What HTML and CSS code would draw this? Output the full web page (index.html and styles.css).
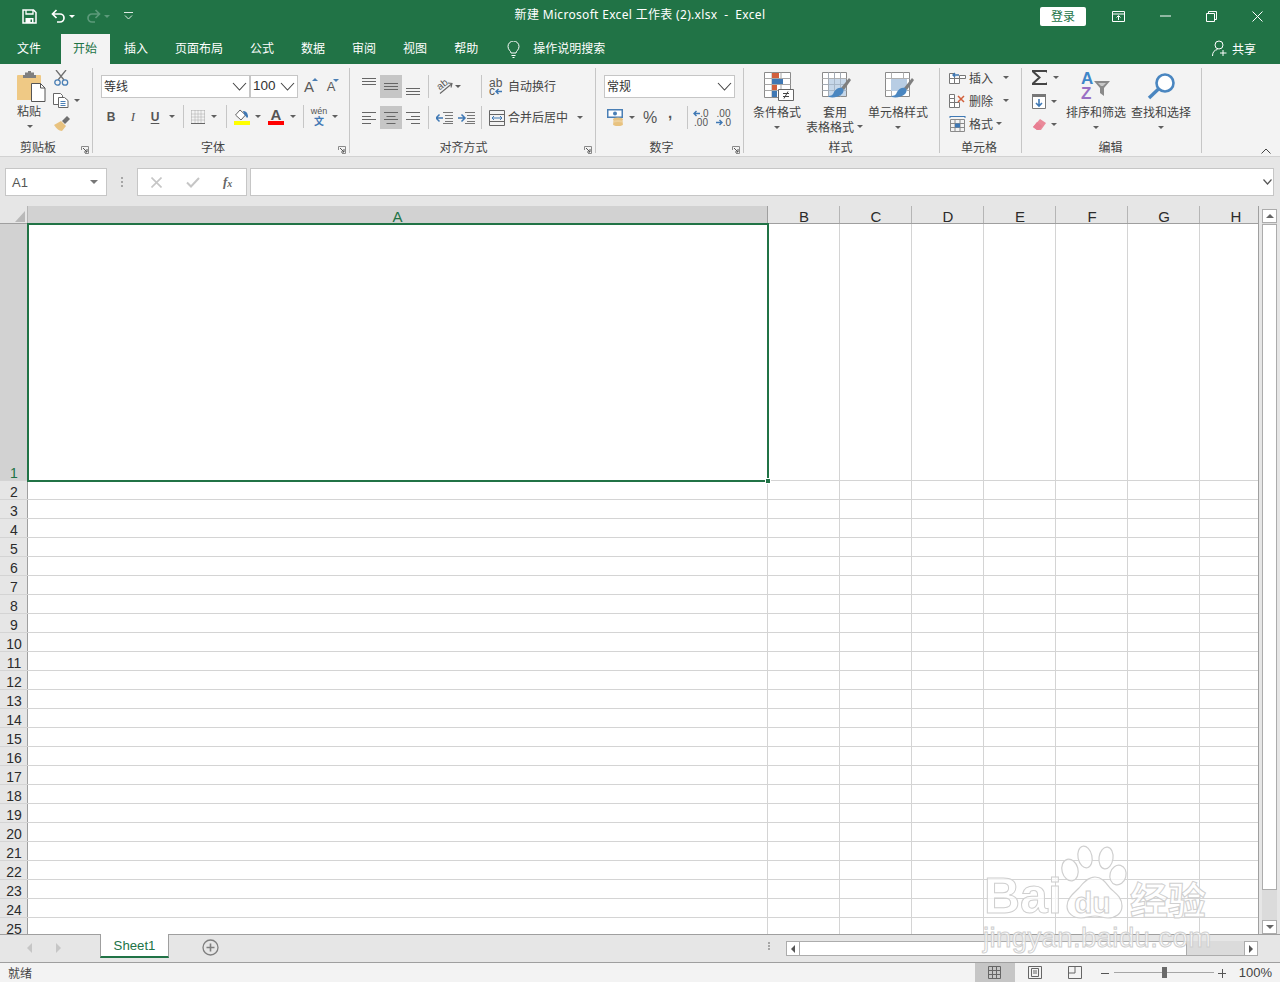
FILE: index.html
```html
<!DOCTYPE html>
<html lang="zh-CN">
<head>
<meta charset="utf-8">
<title>新建 Microsoft Excel 工作表 (2).xlsx - Excel</title>
<link rel="stylesheet" href="styles.css">
</head>
<body>
<svg class="sprite" aria-hidden="true">
  <symbol id="chev" viewBox="0 0 15 9"><path d="M1 1l6.500 7L14 1" fill="none" stroke="#444" stroke-width="1.100"/></symbol>
  <symbol id="launch" viewBox="0 0 8 8"><path d="M.5 4V.5h7v7H4" fill="none" stroke="#8a8a8a"/><path d="M2 2l4 4M6 3v3H3" fill="none" stroke="#555"/></symbol>
  <symbol id="a-top" viewBox="0 0 14 20"><path d="M0 1.500h14M0 4.500h14M0 7.500h14" stroke="#666"/></symbol>
  <symbol id="a-mid" viewBox="0 0 14 20"><path d="M0 6.500h14M0 9.500h14M0 12.500h14" stroke="#666"/></symbol>
  <symbol id="a-bot" viewBox="0 0 14 20"><path d="M0 11.500h14M0 14.500h14M0 17.500h14" stroke="#666"/></symbol>
  <symbol id="a-l" viewBox="0 0 14 14"><path d="M0 1.500h14M0 5.500h9M0 8.500h14M0 12.500h9" stroke="#666"/></symbol>
  <symbol id="a-c" viewBox="0 0 14 14"><path d="M0 1.500h14M2.500 5.500h9M0 8.500h14M2.500 12.500h9" stroke="#666"/></symbol>
  <symbol id="a-r" viewBox="0 0 14 14"><path d="M0 1.500h14M5 5.500h9M0 8.500h14M5 12.500h9" stroke="#666"/></symbol>
  <symbol id="brush" viewBox="0 0 30 29"><path d="M19 16l8-10 2 2-7 10z" fill="#7f7f7f"/><path d="M12 20c2-4 6-5 8-4s2 4 0 6c-3 3-9 4-13 3l-1-1c3 0 5-1 6-4z" fill="#4a86c0"/></symbol>
  <symbol id="arl" viewBox="0 0 7 7"><path d="M7 3.500H1M3.500 1L1 3.500 3.500 6" fill="none" stroke="#3f78b4" stroke-width="1.400"/></symbol>
  <symbol id="arr" viewBox="0 0 7 7"><path d="M0 3.500h6M3.500 1L6 3.500 3.500 6" fill="none" stroke="#3f78b4" stroke-width="1.400"/></symbol>
</svg>

<header class="titlebar">
  <div class="qat">
    <svg class="i-save" width="15" height="15" viewBox="0 0 15 15"><path d="M1 1h10.500L14 3.500V14H1z" fill="none" stroke="#fff" stroke-width="1.500"/><path d="M4 1v4h7V1" fill="none" stroke="#fff" stroke-width="1.300"/><path d="M3.500 9h8v5h-8z" fill="#fff"/><path d="M8.500 10.500H10V13H8.500z" fill="#217346"/></svg>
    <svg class="i-undo" width="15" height="14" viewBox="0 0 15 14"><path d="M5.500 1l-4 4 4 4M1.500 5H9a4 4 0 0 1 0 8H6" fill="none" stroke="#fff" stroke-width="1.700"/></svg>
    <span class="caret light w12"></span>
    <svg class="i-redo" width="15" height="14" viewBox="0 0 15 14"><path d="M9.500 1l4 4-4 4M13.500 5H6a4 4 0 0 0 0 8h3" fill="none" stroke="#5c9a7a" stroke-width="1.700"/></svg>
    <span class="caret dim w12"></span>
    <svg class="i-custom" width="9" height="8" viewBox="0 0 9 8"><path d="M0 .5h9M1 3.500l3.500 3.500L8 3.500" fill="none" stroke="#dfeae4"/></svg>
  </div>
  <div class="doc-title">新建 Microsoft Excel 工作表 (2).xlsx&nbsp; -&nbsp; Excel</div>
  <div class="winctl">
    <button class="login">登录</button>
    <span class="wbtn"><svg width="14" height="11" viewBox="0 0 14 11"><path d="M.5.500h12v10H.500zM.5 3h12" fill="none" stroke="#fff"/><path d="M6.500 9V5M4.500 6.500l2-2 2 2" fill="none" stroke="#fff"/></svg></span>
    <span class="wbtn"><svg width="11" height="2" viewBox="0 0 11 2"><path d="M0 1h11" stroke="#fff"/></svg></span>
    <span class="wbtn"><svg width="11" height="11" viewBox="0 0 11 11"><path d="M.5 2.500h8v8h-8zM2.500 2.500v-2h8v8h-2" fill="none" stroke="#fff"/></svg></span>
    <span class="wbtn"><svg width="11" height="11" viewBox="0 0 11 11"><path d="M.5.500l10 10M10.500.500l-10 10" stroke="#fff"/></svg></span>
  </div>
</header>

<nav class="tabs">
  <span class="tab first">文件</span>
  <span class="tab active">开始</span>
  <span class="tab">插入</span>
  <span class="tab">页面布局</span>
  <span class="tab">公式</span>
  <span class="tab">数据</span>
  <span class="tab">审阅</span>
  <span class="tab">视图</span>
  <span class="tab">帮助</span>
  <svg class="bulb" width="13" height="17" viewBox="0 0 13 17"><path d="M4 12c0-2-3-3-3-6.500a5.500 5.500 0 0 1 11 0C12 9 9 10 9 12zM4.500 14.500h4M5.500 16.500h2" fill="none" stroke="#fff"/></svg>
  <span class="tell">操作说明搜索</span>
  <span class="share">
    <svg width="15" height="17" viewBox="0 0 15 17"><circle cx="7" cy="5" r="4" fill="none" stroke="#fff"/><path d="M.5 16c0-4 2-6 5-6.500M11 10v6M8 13h6.500" fill="none" stroke="#fff"/></svg>
    共享
  </span>
</nav>

<section class="ribbon">
  <div class="group g-clip">
    <div class="body clip">
      <div class="paste">
        <svg width="29" height="31" viewBox="0 0 29 31"><path d="M0 5a1 1 0 0 1 1-1h22a1 1 0 0 1 1 1v24H0z" fill="#efc985"/><path d="M8 4V1.500h3V0h3v1.500h3V4h2v3H6V4z" fill="#7f7f7f"/><path d="M14.500 12.500h9l4.500 4.500v13.500H14.500z" fill="#fff" stroke="#555"/><path d="M23.500 12.500V17H28" fill="none" stroke="#555"/></svg>
        <span class="lbl">粘贴</span>
        <span class="caret"></span>
      </div>
      <div class="clip-tools">
        <svg width="15" height="16" viewBox="0 0 15 16"><path d="M2 0l8 10M12 0L4 10" stroke="#6f6f6f" stroke-width="1.300"/><circle cx="3.500" cy="12.500" r="2.700" fill="none" stroke="#4a7fb5" stroke-width="1.300"/><circle cx="11" cy="12.500" r="2.700" fill="none" stroke="#4a7fb5" stroke-width="1.300"/></svg>
        <span class="row-mini">
          <svg width="16" height="15" viewBox="0 0 16 15"><path d="M.5.500h7l2 2v9H.500z" fill="#fff" stroke="#666"/><path d="M5.500 4.500h6l3.500 3v7H5.500z" fill="#fff" stroke="#666"/><path d="M7.500 8.500h5M7.500 10.500h5M7.500 12.500h5" stroke="#4a7fb5"/></svg>
          <span class="caret w12"></span>
        </span>
        <svg class="painter" width="17" height="15" viewBox="0 0 17 15"><path d="M9 5l5-5 3 3-5 5z" fill="#6f6f6f"/><path d="M1 9l7-4 5 5-4 5c-3 0-6-3-8-6z" fill="#e8c27f"/></svg>
      </div>
    </div>
    <div class="glabel"><span>剪贴板</span><svg class="launch"><use href="#launch"/></svg></div>
  </div>

  <div class="group g-font">
    <div class="body rows">
      <div class="row">
        <div class="combo c-font"><span>等线</span><svg width="15" height="9"><use href="#chev"/></svg></div>
        <div class="combo c-size"><span class="num">100</span><svg width="15" height="9"><use href="#chev"/></svg></div>
        <span class="fs up">A<i></i></span>
        <span class="fs down">A<i></i></span>
      </div>
      <div class="row">
        <span class="w22 fmt b">B</span><span class="w22 fmt it">I</span><span class="w22 fmt u">U</span><span class="caret w12"></span>
        <span class="sep s5"></span>
        <span class="w18"><svg width="14" height="14" viewBox="0 0 14 14"><path d="M.5.500h13M.5 4h13M.5 7h13M.5 10h13M.5.500v13M4 .5v13M7 .5v13M10 .5v13M13.500.500v13" stroke="#a8a8a8" stroke-dasharray="1 1" fill="none"/><path d="M0 13.500h14" stroke="#666"/></svg></span><span class="caret w14"></span>
        <span class="sep s5"></span>
        <span class="w20 col"><svg width="16" height="12" viewBox="0 0 16 12"><path d="M6 1l5.500 5L7 11 1.500 6z" fill="#fff" stroke="#666"/><path d="M9 2c3 0 5 2 5 6l-1 1-3-4z" fill="#3f78b4"/></svg><i class="bar yellow"></i></span><span class="caret w12"></span>
        <span class="w24 col"><span class="fc">A</span><i class="bar red"></i></span><span class="caret w10"></span>
        <span class="sep s5"></span>
        <span class="w20 wen"><span>wén</span><b>文</b></span><span class="caret w12"></span>
      </div>
    </div>
    <div class="glabel"><span>字体</span><svg class="launch"><use href="#launch"/></svg></div>
  </div>

  <div class="group g-align">
    <div class="body rows">
      <div class="row">
        <span class="w22"><svg width="14" height="20"><use href="#a-top"/></svg></span><span class="w22 on"><svg width="14" height="20"><use href="#a-mid"/></svg></span><span class="w22"><svg width="14" height="20"><use href="#a-bot"/></svg></span>
        <span class="sep s4"></span>
        <span class="w18 ml6"><svg width="17" height="17" viewBox="0 0 17 17"><path d="M4 15.500L15.500 6M12 5l4 .5-1 4" fill="none" stroke="#666" stroke-width="1.100"/><text x="2" y="11" class="orient" transform="rotate(-38 5 9)">ab</text></svg></span><span class="caret w10"></span>
        <span class="sep ml18"></span>
        <span class="wrapic"><span class="abc">ab<br>c<svg width="7" height="7"><use href="#arl"/></svg></span></span>
        <span class="lbl ml3">自动换行</span>
      </div>
      <div class="row">
        <span class="w22"><svg width="14" height="14"><use href="#a-l"/></svg></span><span class="w22 on"><svg width="14" height="14"><use href="#a-c"/></svg></span><span class="w22"><svg width="14" height="14"><use href="#a-r"/></svg></span>
        <span class="sep s4"></span>
        <span class="w18 ml6"><svg width="17" height="12" viewBox="0 0 17 12"><path d="M7 .5h10M9 3.500h8M9 6.500h8M9 9.500h8M7 11.500h10" stroke="#777"/><path d="M0 6h7M3.500 2.500L0 6l3.500 3.500" fill="none" stroke="#3f78b4" stroke-width="1.500"/></svg></span>
        <span class="w18 ml4"><svg width="17" height="12" viewBox="0 0 17 12"><path d="M7 .5h10M9 3.500h8M9 6.500h8M9 9.500h8M7 11.500h10" stroke="#777"/><path d="M0 6h7M3.500 2.500L7 6 3.500 9.500" fill="none" stroke="#3f78b4" stroke-width="1.500"/></svg></span>
        <span class="sep ml6r"></span>
        <span class="wrapic"><svg width="16" height="16" viewBox="0 0 16 16"><path d="M.5.500h15v15H.500zM.5 4.500h15M.5 11.500h15" fill="none" stroke="#666"/><path d="M3 8h10M5 6L3 8l2 2M11 6l2 2-2 2" fill="none" stroke="#3f78b4"/></svg></span>
        <span class="lbl ml3">合并后居中</span><span class="caret w12 ml6"></span>
      </div>
    </div>
    <div class="glabel"><span>对齐方式</span><svg class="launch"><use href="#launch"/></svg></div>
  </div>

  <div class="group g-num">
    <div class="body rows">
      <div class="row">
        <div class="combo c-fmt"><span>常规</span><svg width="15" height="9"><use href="#chev"/></svg></div>
      </div>
      <div class="row">
        <span class="w22"><svg width="17" height="17" viewBox="0 0 17 17"><path d="M0 0h16v9H0z" fill="#4a7fb5"/><path d="M1.500 1.500h13v6h-13z" fill="#fff"/><circle cx="8" cy="4.500" r="2" fill="#4a7fb5"/><ellipse cx="11" cy="10.500" rx="5" ry="2" fill="#e8c27f"/><ellipse cx="11" cy="13" rx="5" ry="2" fill="#edd09c"/><ellipse cx="11" cy="15" rx="5" ry="2" fill="#e8c27f"/></svg></span><span class="caret w12"></span>
        <span class="w24 pct">%</span><span class="w16 comma">,</span>
        <span class="sep ml9"></span>
        <span class="w18 ml4 dec"><span><svg width="7" height="7"><use href="#arl"/></svg>.0</span><span>.00</span></span>
        <span class="w17 ml5 dec"><span>.00</span><span><svg width="7" height="7"><use href="#arr"/></svg>.0</span></span>
      </div>
    </div>
    <div class="glabel"><span>数字</span><svg class="launch"><use href="#launch"/></svg></div>
  </div>

  <div class="group g-style">
    <div class="body bigs">
      <div class="big b48">
        <svg class="st" width="30" height="29" viewBox="0 0 30 29"><path d="M.5.500h26v25H.500z" fill="#fff" stroke="#8a8a8a"/><path d="M8 .5v25M17 .5v25M.5 6.500h26M.5 12.500h26M.5 18.500h26" stroke="#a6a6a6"/><path d="M8 1h7v5H8zM8 13h5v5H8z" fill="#d2603c"/><path d="M8 7h11v5H8zM8 19h5v6H8z" fill="#3f78b4"/><path d="M14.500 17.500h15v11h-15z" fill="#fff" stroke="#666"/><path d="M19 21.500h6M19 24.500h6M24 19.500l-4 7" stroke="#444"/></svg>
        <span class="lbl">条件格式</span><span class="caret"></span>
      </div>
      <div class="big b58">
        <svg class="st" width="30" height="29" viewBox="0 0 30 29"><path d="M.5.500h24v24H.500z" fill="#fff" stroke="#8a8a8a"/><path d="M6.500.5v24M12.500.5v24M18.500.5v24M.5 6.500h24M.5 12.500h24M.5 18.500h24" stroke="#b0b0b0"/><path d="M7 7h17v17H7z" fill="#b8cde4" opacity=".8"/><path d="M6.500.5v24M12.500.5v24M18.500.5v24M.5 12.500h24M.5 18.500h24" stroke="#9aa8b8" opacity=".5"/><use href="#brush"/></svg>
        <span class="lbl">套用</span><span class="lbl2">表格格式<span class="caret w10"></span></span>
      </div>
      <div class="big b60">
        <svg class="st" width="30" height="29" viewBox="0 0 30 29"><path d="M.5.500h24v24H.500z" fill="#fff" stroke="#8a8a8a"/><path d="M6.500.5v6M18.500.5v6M.5 6.500h24M.5 18.500h24M6.500 18.500v6" stroke="#b0b0b0"/><path d="M6 7h16v12H6z" fill="#b8cde4"/><use href="#brush"/></svg>
        <span class="lbl">单元格样式</span><span class="caret"></span>
      </div>
    </div>
    <div class="glabel"><span>样式</span></div>
  </div>

  <div class="group g-cells">
    <div class="body cellcol">
      <div class="crow">
        <svg width="17" height="16" viewBox="0 0 17 16"><path d="M.5 3.500h5v5h-5zM.5 8.500h5v5h-5zM5.500 8.500h5v5h-5zM10.500 5.500h6v3h-6z" fill="#fff" stroke="#777"/><path d="M10 5H4M6 3L4 5l2 2" fill="none" stroke="#3f78b4" stroke-width="1.400"/></svg>
        <span class="lbl ml3">插入</span><span class="caret w12 ml7"></span>
      </div>
      <div class="crow">
        <svg width="17" height="16" viewBox="0 0 17 16"><path d="M.5 1.500h5v4h-5zM.5 5.500h5v4h-5zM.5 9.500h5v5h-5zM5.500 9.500h5v5h-5z" fill="#fff" stroke="#777"/><path d="M9 3l6 6M15 3l-6 6" stroke="#d2603c" stroke-width="1.500"/></svg>
        <span class="lbl ml3">删除</span><span class="caret w12 ml7"></span>
      </div>
      <div class="crow">
        <svg width="17" height="16" viewBox="0 0 17 16"><path d="M1.500 3.500h14v12h-14zM1.500 7.500h14M1.500 11.500h14M6 3.500v12M11 3.500v12" fill="none" stroke="#8a8a8a"/><path d="M6 7.500h5v4H6z" fill="#3f78b4"/><path d="M1 .5h15M1 0v2M16 0v2" stroke="#3f78b4"/></svg>
        <span class="lbl ml3">格式</span><span class="caret w12"></span>
      </div>
    </div>
    <div class="glabel"><span>单元格</span></div>
  </div>

  <div class="group g-edit">
    <div class="body edit">
      <div class="ecol">
        <div class="erow e1"><svg width="15" height="15" viewBox="0 0 15 15"><path d="M15 2.500V1H1v.5L7.500 7.500 1 13.500v.5h14v-1.500" fill="none" stroke="#444" stroke-width="2"/></svg><span class="caret w12 ml3"></span></div>
        <div class="erow"><svg width="15" height="15" viewBox="0 0 15 15"><path d="M.5.500h13v14H.500z" fill="#fff" stroke="#777"/><path d="M0 0h14v3H0z" fill="#777"/><path d="M7 5v7M4 9l3 3 3-3" fill="none" stroke="#3f78b4" stroke-width="1.600"/></svg><span class="caret w12 ml1"></span></div>
        <div class="erow"><svg width="15" height="14" viewBox="0 0 15 14"><path d="M8 1l6 4-5 7H5L1 9z" fill="#ea8a9a"/><path d="M1 9l4-5 5 4-3 4H5z" fill="#e87e92"/></svg><span class="caret w12 ml1"></span></div>
      </div>
      <div class="big b60 sortbtn">
        <div class="sorti"><span class="sa">A</span><span class="sz">Z</span><svg width="16" height="15" viewBox="0 0 16 15"><path d="M0 0h16L10 7v8L6 12V7z" fill="#8a8a8a"/><path d="M4 2h8L9 5H7z" fill="#c8c8c8"/></svg></div>
        <span class="lbl">排序和筛选</span><span class="caret"></span>
      </div>
      <div class="big b60 ml5">
        <svg width="29" height="29" viewBox="0 0 29 29"><circle cx="18" cy="11" r="8.500" fill="#fff" stroke="#4a86c0" stroke-width="2.600"/><path d="M11.500 17L2 26" stroke="#4a86c0" stroke-width="3.400"/></svg>
        <span class="lbl">查找和选择</span><span class="caret"></span>
      </div>
    </div>
    <div class="glabel"><span>编辑</span></div>
  </div>

  <div class="collapse"><svg width="10" height="6" viewBox="0 0 10 6"><path d="M.5 5.500L5 1l4.500 4.500" fill="none" stroke="#444"/></svg></div>
</section>

<section class="fbar">
  <div class="namebox"><span>A1</span><i class="tri"></i></div>
  <div class="vdots"><i></i><i></i><i></i></div>
  <div class="fbtns">
    <svg width="11" height="11" viewBox="0 0 11 11"><path d="M.5.500l10 10M10.500.500l-10 10" stroke="#c6c6c6" stroke-width="1.600"/></svg>
    <svg width="14" height="11" viewBox="0 0 14 11"><path d="M1 5.500l4 4L13 1" fill="none" stroke="#c6c6c6" stroke-width="2"/></svg>
    <span class="fx">f<sub>x</sub></span>
  </div>
  <div class="finput"><svg width="9" height="6" viewBox="0 0 9 6"><path d="M.5.500L4.500 5l4-4.500" fill="none" stroke="#555" stroke-width="1.200"/></svg></div>
</section>

<main class="main">
  <div class="sheet">
    <div class="colhead">
      <div class="corner"><i></i></div>
      <div class="ch a active">A</div><div class="ch">B</div><div class="ch">C</div><div class="ch">D</div><div class="ch">E</div><div class="ch">F</div><div class="ch">G</div><div class="ch">H</div>
    </div>
    <div class="r first"><div class="rh active">1</div><div class="cells"></div></div>
    <div class="r"><div class="rh">2</div><div class="cells"></div></div>
    <div class="r"><div class="rh">3</div><div class="cells"></div></div>
    <div class="r"><div class="rh">4</div><div class="cells"></div></div>
    <div class="r"><div class="rh">5</div><div class="cells"></div></div>
    <div class="r"><div class="rh">6</div><div class="cells"></div></div>
    <div class="r"><div class="rh">7</div><div class="cells"></div></div>
    <div class="r"><div class="rh">8</div><div class="cells"></div></div>
    <div class="r"><div class="rh">9</div><div class="cells"></div></div>
    <div class="r"><div class="rh">10</div><div class="cells"></div></div>
    <div class="r"><div class="rh">11</div><div class="cells"></div></div>
    <div class="r"><div class="rh">12</div><div class="cells"></div></div>
    <div class="r"><div class="rh">13</div><div class="cells"></div></div>
    <div class="r"><div class="rh">14</div><div class="cells"></div></div>
    <div class="r"><div class="rh">15</div><div class="cells"></div></div>
    <div class="r"><div class="rh">16</div><div class="cells"></div></div>
    <div class="r"><div class="rh">17</div><div class="cells"></div></div>
    <div class="r"><div class="rh">18</div><div class="cells"></div></div>
    <div class="r"><div class="rh">19</div><div class="cells"></div></div>
    <div class="r"><div class="rh">20</div><div class="cells"></div></div>
    <div class="r"><div class="rh">21</div><div class="cells"></div></div>
    <div class="r"><div class="rh">22</div><div class="cells"></div></div>
    <div class="r"><div class="rh">23</div><div class="cells"></div></div>
    <div class="r"><div class="rh">24</div><div class="cells"></div></div>
    <div class="r"><div class="rh">25</div><div class="cells"></div></div>
    <div class="selection"><i></i></div>
  </div>
  <div class="vscroll">
    <span class="sbtn"><i class="t-up"></i></span>
    <div class="vtrack"><div class="vthumb"></div></div>
    <span class="sbtn"><i class="t-down"></i></span>
  </div>
</main>

<section class="sheetbar">
  <i class="t-left nav1"></i>
  <i class="t-right nav2"></i>
  <div class="stab">Sheet1</div>
  <svg class="addsheet" width="17" height="17" viewBox="0 0 17 17"><circle cx="8.500" cy="8.500" r="7.500" fill="none" stroke="#7f7f7f" stroke-width="1.300"/><path d="M8.500 4.500v8M4.500 8.500h8" stroke="#7f7f7f" stroke-width="1.600"/></svg>
  <div class="vdots small"><i></i><i></i><i></i></div>
  <div class="hscroll">
    <span class="sbtn"><i class="t-leftd"></i></span>
    <div class="hthumb"></div>
    <span class="sbtn end"><i class="t-rightd"></i></span>
  </div>
</section>

<footer class="status">
  <span class="ready">就绪</span>
  <div class="views">
    <span class="vb on"><svg width="13" height="13" viewBox="0 0 13 13"><path d="M.5.500h12v12H.500zM4.500.5v12M8.500.5v12M.5 4.500h12M.5 8.500h12" fill="none" stroke="#666"/></svg></span>
    <span class="vb"><svg width="14" height="13" viewBox="0 0 14 13"><path d="M.5.500h13v12H.500z" fill="none" stroke="#666"/><path d="M3.500 2.500h7v8h-7zM5 5h4M5 7h4" fill="none" stroke="#666"/></svg></span>
    <span class="vb"><svg width="14" height="13" viewBox="0 0 14 13"><path d="M.5 12.500V.5h13v12zM7 .5V7H.500" fill="none" stroke="#666"/></svg></span>
  </div>
  <span class="zm minus"></span>
  <div class="slider"><i></i></div>
  <span class="zm plus"></span>
  <span class="pctz">100%</span>
</footer>

<div class="wm" aria-label="Baidu经验">
  <svg class="wm-paw" width="72" height="76" viewBox="0 0 72 76"><g fill="rgba(255,255,255,.72)" stroke="#cfcfcf" stroke-width="1.200"><ellipse cx="12" cy="26" rx="8" ry="11" transform="rotate(-15 12 26)"/><ellipse cx="27" cy="13" rx="7" ry="11" transform="rotate(-12 27 13)"/><ellipse cx="48" cy="14" rx="7" ry="11" transform="rotate(8 48 14)"/><ellipse cx="60" cy="31" rx="8" ry="10" transform="rotate(15 60 31)"/><path d="M37 33c7 0 11 6 15 11 5 5 12 9 12 18 0 8-7 12-14 12-5 0-8-2-13-2s-8 2-14 2c-8 0-14-5-14-12 0-8 7-13 12-18 4-5 9-11 16-11z"/></g></svg>
  <span class="wm-bai">Bai</span>
  <span class="wm-du">du</span>
  <span class="wm-jy">经验</span>
  <span class="wm-url">jingyan.baidu.com</span>
</div>
</body>
</html>
```
FILE: styles.css
```css
* { box-sizing: border-box; }
html, body { margin: 0; padding: 0; }
body {
  width: 1280px; height: 982px; overflow: hidden; position: relative;
  font: 12px/15px "Noto Sans CJK SC", "Noto Sans", sans-serif;
  color: #444; background: #e6e6e6;
}
i, b { font-style: normal; }
svg { display: block; flex: none; }
.sprite { position: absolute; width: 0; height: 0; }

.titlebar { height: 32px; background: #217346; color: #fff; display: grid; grid-template-columns: 1fr auto 1fr; align-items: center; }
.qat { display: flex; align-items: center; padding-left: 22px; }
.i-undo { margin-left: 14px; }
.i-redo { margin-left: 8px; }
.i-custom { margin-left: 11px; }
.doc-title { font-family: "Noto Sans", "Noto Sans CJK SC", sans-serif; font-size: 12px; letter-spacing: .32px; line-height: 29px; height: 32px; white-space: nowrap; }
.winctl { display: flex; align-items: center; justify-content: flex-end; }
.login { width: 46px; height: 19px; margin: 0 10px 0 0; padding: 0 0 2px; border: 0; border-radius: 2px; background: #fff; color: #217346; font: 12px/17px "Noto Sans CJK SC", sans-serif; }
.wbtn { width: 46px; height: 32px; display: flex; align-items: center; justify-content: center; }

.tabs { height: 32px; background: #217346; color: #fff; display: flex; align-items: flex-end; }
.tab { height: 30px; line-height: 28px; padding: 0 13px; margin-right: 1px; }
.tab.first { padding: 0 19px 0 17px; }
.tab.active { background: #f3f3f3; color: #217346; padding: 0 13px 0 12px; }
.bulb { margin: 0 0 6px 15px; }
.tell { margin-left: 13px; line-height: 28px; height: 30px; }
.share { margin-left: auto; padding: 0 24px 2px 0; display: flex; align-items: center; gap: 5px; height: 30px; }

.ribbon { height: 93px; background: #f3f3f3; border-bottom: 1px solid #d2d2d2; display: flex; align-items: flex-start; padding-top: 4px; }
.group { height: 85px; border-right: 1px solid #c6c6c6; display: flex; flex-direction: column; }
.g-clip { width: 93px; }
.g-font { width: 257px; }
.g-align { width: 246px; }
.g-num { width: 148px; }
.g-style { width: 196px; }
.g-cells { width: 82px; }
.g-edit { width: 180px; }
.body { height: 71px; }
.glabel { height: 14px; line-height: 16px; display: flex; }
.glabel span { flex: 1; text-align: center; }
.g-style .glabel span, .g-edit .glabel span, .g-align .glabel span { margin-right: 2px; }
.g-cells .glabel span { margin-right: 3px; }
.launch { width: 8px; height: 8px; margin: 7px 3px 0 5px; }

.caret { display: inline-flex; align-items: center; justify-content: center; height: 8px; }
.caret::after { content: ""; border: 3px solid transparent; border-top: 3px solid #5f5f5f; border-bottom: 0; display: block; }
.caret.light::after { border-top-color: #fff; }
.caret.dim::after { border-top-color: #5c9a7a; }
.w10 { width: 10px; } .w12 { width: 12px; } .w14 { width: 14px; } .w16 { width: 16px; } .w17 { width: 17px; } .w18 { width: 18px; } .w20 { width: 20px; } .w22 { width: 22px; } .w24 { width: 24px; }
.ml1 { margin-left: 1px; } .ml3 { margin-left: 3px; } .ml4 { margin-left: 4px; } .ml5 { margin-left: 5px; } .ml6 { margin-left: 6px; } .ml7 { margin-left: 7px; }

.clip { display: flex; padding: 3px 0 0 17px; }
.paste { width: 29px; display: flex; flex-direction: column; align-items: flex-start; }
.paste .lbl { margin-top: 1px; }
.paste .caret { width: 26px; margin-top: 4px; }
.clip-tools { margin-left: 7px; display: flex; flex-direction: column; gap: 7px; }
.clip-tools > svg:first-child { margin-left: 1px; margin-top: -1px; }
.painter { margin-top: 1px; }
.row-mini { display: flex; align-items: center; }
.row-mini .caret { margin-left: 2px; }

.rows { padding-top: 7px; display: flex; flex-direction: column; gap: 7px; }
.row { height: 23px; display: flex; align-items: center; }
.g-font .rows { padding-left: 8px; }
.g-font .row:last-child { margin-left: -1px; }
.g-align .rows { padding-left: 8px; gap: 8px; }
.g-num .rows { padding-left: 8px; gap: 8px; }
.row > span { display: flex; align-items: center; justify-content: center; height: 23px; }
.row > span.caret { height: 23px; }
.row > span.lbl { display: block; line-height: 21px; height: 23px; white-space: nowrap; }
.on { background: #c6c6c6; }

.combo { height: 23px; background: #fff; border: 1px solid #c6c6c6; display: flex; align-items: center; justify-content: space-between; padding: 0 2px; color: #333; }
.combo span { margin-top: -2px; }
.c-font { width: 149px; }
.c-size { width: 48px; }
.c-fmt { width: 131px; }
.num { font: 13.500px/20px "Liberation Sans", sans-serif; }
.row > .fs { position: relative; width: 22px; font: 15px/20px "Liberation Sans", sans-serif; color: #595959; }
.row > .fs.down { font-size: 13px; }
.fs i { position: absolute; right: 2px; top: 3px; border: 3px solid transparent; border-top: 0; border-bottom: 3px solid #4a7fb5; }
.fs.down i { border-bottom: 0; border-top: 3px solid #4a7fb5; top: 4px; right: 3px; }
.row > .fmt { font: bold 12px/20px "Liberation Sans", sans-serif; color: #555; }
.row > .fmt.it { font: italic 13px/20px "Liberation Serif", serif; }
.fmt.u { text-decoration: underline; text-underline-offset: 2px; }
.sep { width: 1px; background: #c6c6c6; flex: none; }
.s5 { margin: 0 5px; }
.s4 { margin-left: 4px; }
.ml18 { margin-left: 18px; }
.ml6r { margin-left: 6px; }
.ml9 { margin-left: 9px; }
.row > .wrapic { margin-left: 7px; width: 16px; flex: none; }
.row > .col { flex-direction: column; }
.bar { display: block; width: 16px; height: 4px; }
.yellow { background: #ff0; }
.red { background: #f00; }
.fc { font: bold 15px/13px "Liberation Sans", sans-serif; color: #555; height: 13px; }
.row > .wen { flex-direction: column; font: 9px/8px "Liberation Sans", sans-serif; color: #555; gap: 1px; }
.wen b { font: 700 10px/10px "Noto Sans CJK SC", sans-serif; color: #3f78b4; }
.orient { font: 10px "Liberation Sans", sans-serif; fill: #555; }
.abc { font: 12px/8px "Liberation Sans", sans-serif; color: #555; display: block; width: 16px; white-space: nowrap; }
.abc svg { display: inline-block; }
.row > .pct { font: 16px/20px "Liberation Sans", sans-serif; color: #555; }
.row > .comma { font: bold 15px/14px "Liberation Sans", sans-serif; color: #555; padding-bottom: 9px; }
.row > .dec { flex-direction: column; font: 10px/9px "Liberation Sans", sans-serif; color: #555; white-space: nowrap; }
.dec span { display: flex; align-items: center; height: 9px; }

.bigs { display: flex; padding: 4px 0 0 9px; gap: 5px; }
.big { display: flex; flex-direction: column; align-items: center; flex: none; }
.big > svg, .sorti { height: 29px; margin-bottom: 3px; }
.big .lbl, .big .lbl2 { white-space: nowrap; display: block; }
.big .lbl2 { display: flex; align-items: center; align-self: flex-start; }
.big .caret { margin-top: 4px; }
.big .lbl2 .caret { margin: 0 0 0 1px; }
.b48 { width: 48px; }
.b58 { width: 58px; }
.b60 { width: 60px; flex: none; }
.bigs .b60 { margin-left: -1px; }
.st { margin-left: 2px; margin-right: -1px; }

.cellcol { padding: 0 0 0 9px; margin-top: -2px; height: 73px; }
.crow { height: 23px; display: flex; align-items: center; }
.edit { display: flex; padding: 4px 0 0 10px; }
.ecol { width: 34px; flex: none; margin-top: -6px; display: flex; flex-direction: column; }
.erow { height: 23.500px; flex: none; display: flex; align-items: center; }
.sorti { position: relative; width: 30px; }
.sa, .sz { position: absolute; left: 0; font: bold 17px/14px "Liberation Sans", sans-serif; }
.sa { top: 0; color: #3f86c8; }
.sz { top: 15px; color: #9a6fc4; }
.sorti svg { position: absolute; left: 13px; top: 9px; }

.collapse { flex: 1; height: 86px; display: flex; align-items: flex-end; justify-content: flex-end; padding: 0 9px 0 0; }

.fbar { height: 49px; padding-top: 11px; display: flex; align-items: flex-start; background: #e6e6e6; }
.namebox { width: 102px; height: 28px; margin-left: 5px; background: #fff; border: 1px solid #c6c6c6; display: flex; align-items: center; justify-content: space-between; padding: 0 8px 0 6px; font: 13px "Liberation Sans", sans-serif; color: #555; }
.tri { border: 4px solid transparent; border-top: 4px solid #777; border-bottom: 0; }
.vdots { width: 2px; margin: 0 14px; padding-top: 9px; display: flex; flex-direction: column; gap: 2px; }
.vdots i { width: 2px; height: 2px; background: #a6a6a6; display: block; }
.fbtns { width: 110px; height: 28px; background: #fff; border: 1px solid #c6c6c6; display: flex; align-items: center; padding-left: 13px; }
.fbtns svg:nth-child(2) { margin-left: 24px; }
.fx { margin-left: 23px; font: italic bold 13px/14px "Liberation Serif", serif; color: #666; }
.fx sub { font-size: 10px; vertical-align: -1px; line-height: 0; }
.finput { width: 1024px; height: 28px; margin-left: 3px; background: #fff; border: 1px solid #c6c6c6; display: flex; align-items: center; justify-content: flex-end; padding-right: 1px; }

.main { height: 729px; display: flex; border-bottom: 1px solid #9f9f9f; }
.sheet { position: relative; width: 1259px; height: 728px; overflow: hidden; background: #fff; border-right: 1px solid #9f9f9f; font-family: "Liberation Sans", sans-serif; color: #2b2b2b; }
.colhead { height: 18px; display: flex; background: #e6e6e6; border-bottom: 1px solid #9f9f9f; }
.corner { width: 28px; flex: none; border-right: 1px solid #b5b5b5; padding: 5px 0 0 15px; }
.corner i { display: block; width: 0; height: 0; border-left: 10px solid transparent; border-bottom: 11px solid #b9b9b9; }
.ch { width: 72px; flex: none; border-right: 1px solid #b5b5b5; text-align: center; font-size: 15px; line-height: 22px; padding-left: 1px; }
.ch.a { width: 740px; padding-left: 0; }
.ch.active { background: #d2d2d2; color: #217346; border-right-color: #9f9f9f; }
.r { height: 19px; display: flex; border-bottom: 1px solid #d4d4d4; }
.r.first { height: 257px; }
.rh { width: 28px; flex: none; display: flex; align-items: flex-end; justify-content: center; font-size: 14px; line-height: 14px; padding-left: 1px; background: #e6e6e6; border-right: 1px solid #9f9f9f; }
.rh.active { background: #d2d2d2; color: #217346; }
.cells { flex: 1; background: repeating-linear-gradient(90deg, #d4d4d4 0 1px, transparent 1px 72px) 739px 0 no-repeat; }
.selection { position: absolute; left: 27px; top: 17px; width: 742px; height: 259px; border: 2px solid #217346; }
.selection i { position: absolute; right: -4px; bottom: -4px; width: 6px; height: 6px; background: #217346; border: 1px solid #fff; }

.vscroll { width: 21px; padding: 3px 0 0 3px; background: #e6e6e6; display: flex; flex-direction: column; align-items: flex-start; }
.sbtn { display: flex; align-items: center; justify-content: center; flex: none; background: #fff; border: 1px solid #acacac; }
.vscroll .sbtn { width: 15px; height: 14px; }
.vtrack { width: 15px; height: 698px; background: #dbdbdb; }
.vthumb { width: 15px; height: 666px; margin-top: 1px; background: #fff; border: 1px solid #acacac; }
.t-up { border: 4px solid transparent; border-top: 0; border-bottom: 4px solid #666; }
.t-down { border: 4px solid transparent; border-bottom: 0; border-top: 4px solid #666; }
.t-leftd { border: 4px solid transparent; border-left: 0; border-right: 4px solid #555; }
.t-rightd { border: 4px solid transparent; border-right: 0; border-left: 4px solid #555; }

.sheetbar { height: 28px; background: #e6e6e6; border-bottom: 1px solid #9f9f9f; display: flex; align-items: flex-start; font-family: "Liberation Sans", sans-serif; }
.t-left, .t-right { display: block; margin-top: 8px; border: 5px solid transparent; }
.t-left { border-left: 0; border-right: 5px solid #c6c6c6; margin-left: 27px; }
.t-right { border-right: 0; border-left: 5px solid #c6c6c6; margin-left: 24px; }
.stab { width: 69px; height: 24px; margin-left: 39px; margin-top: -1px; padding-top: 1px; background: #fff; border: 1px solid #9f9f9f; border-top: 0; border-bottom: 2px solid #217346; color: #217346; text-align: center; font: 13.200px/22px "Liberation Sans", sans-serif; }
.addsheet { margin: 4px 0 0 33px; }
.vdots.small { margin: 0 0 0 549px; padding-top: 7px; gap: 1px; }
.hscroll { margin: 6px 0 0 16px; width: 472px; height: 15px; display: flex; background: #dbdbdb; border-bottom: 1px solid #acacac; }
.hscroll .sbtn { width: 14px; height: 15px; }
.hthumb { width: 387px; height: 15px; background: #fff; border: 1px solid #acacac; border-left: 0; }
.hscroll .end { margin-left: auto; }

.status { height: 19px; background: #f3f3f3; display: flex; align-items: center; }
.ready { padding-left: 8px; }
.views { margin-left: auto; display: flex; margin-right: 6px; }
.vb { width: 40px; height: 19px; display: flex; align-items: center; justify-content: center; }
.vb.on { background: #c6c6c6; }
.zm { width: 8px; height: 8px; margin: 0 5px 0 0; position: relative; display: block; }
.zm::before { content: ""; position: absolute; left: 0; right: 0; top: 4px; height: 1px; background: #555; }
.plus::after { content: ""; position: absolute; top: 0; bottom: -1px; left: 4px; width: 1px; background: #555; }
.slider { width: 100px; height: 1px; background: #a6a6a6; position: relative; margin: 0 4px 0 0; }
.slider i { position: absolute; left: 48px; top: -5px; width: 5px; height: 11px; background: #6a6a6a; }
.pctz { margin-left: 8px; padding-right: 8px; font: 13px/19px "Liberation Sans", sans-serif; color: #444; }

.wm { position: absolute; left: 0; top: 0; width: 1280px; height: 982px; pointer-events: none; }
.wm-paw { position: absolute; left: 1058px; top: 844px; }
.wm span { position: absolute; color: rgba(255,255,255,.72); -webkit-text-stroke: 1px #cfcfcf; white-space: nowrap; }
.wm-bai { left: 984px; top: 866px; font: bold 50px/60px "Liberation Sans", sans-serif; }
.wm-du { left: 1074px; top: 885px; font: bold 30px/36px "Liberation Sans", sans-serif; }
.wm-jy { left: 1130px; top: 874px; font: bold 38px/48px "Noto Sans CJK SC", sans-serif; }
.wm-url { left: 983px; top: 920px; font: 27.500px/36px "Liberation Sans", sans-serif; letter-spacing: .4px; }
```
